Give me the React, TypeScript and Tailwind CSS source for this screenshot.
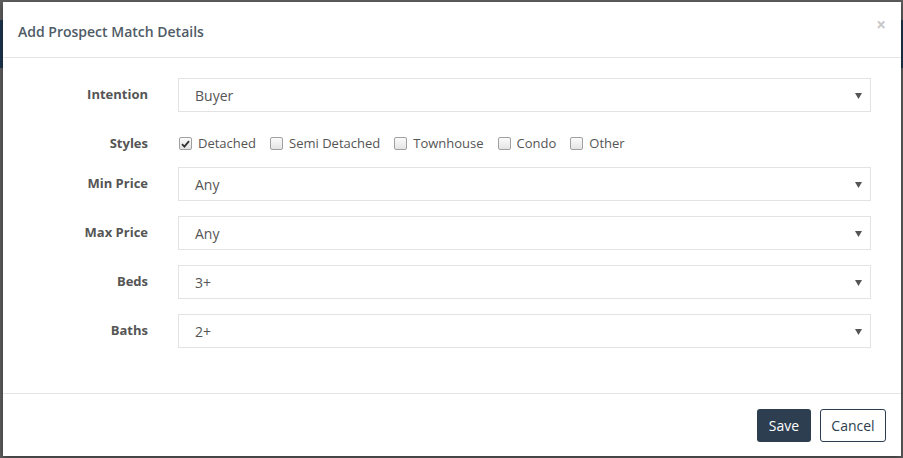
import React from "react";

const font = { fontFamily: '"Open Sans", "Liberation Sans", sans-serif' };

function FakeSelect({ value }: { value: string }) {
    return (
        <div className="flex-1 h-[34px] border border-[#e3e3e3] flex items-center justify-between pl-[16px] pr-[8px] text-[14px] text-[#555]">
            <span>{value}</span>
            <svg width="7" height="6" viewBox="0 0 7 6" className="mt-[1px]">
                <path d="M0 0 H7 L3.5 6 Z" fill="#555" />
            </svg>
        </div>
    );
}

function Check({ checked, label }: { checked?: boolean; label: string }) {
    return (
        <label className="flex items-center gap-[6px] text-[13px] text-[#555]">
            <span className="w-[13px] h-[13px] rounded-[2px] border border-[#a0a0a0] bg-gradient-to-b from-[#fbfbfb] to-[#e4e4e4] flex items-center justify-center">
                {checked && (
                    <svg width="9" height="8" viewBox="0 0 9 8">
                        <path d="M1 4.2 L3.4 6.6 L8 1.2" stroke="#333" strokeWidth="1.8" fill="none" />
                    </svg>
                )}
            </span>
            {label}
        </label>
    );
}

function Row({ label, children }: { label: string; children: React.ReactNode }) {
    return (
        <div className="flex items-center">
            <div className="w-[145px] text-right text-[13px] font-bold text-[#555]">{label}</div>
            <div className="flex-1 flex items-center ml-[30px]">{children}</div>
        </div>
    );
}

export default function App() {
    return (
        <div className="relative w-[903px] h-[458px] bg-[#5e5e5e] overflow-hidden" style={font}>
            {/* page behind the overlay */}
            <div className="absolute left-0 top-[20px] w-full h-[48px] bg-[#1d3550]" />

            {/* Dialog */}
            <div className="absolute left-[3px] top-[2px] w-[898px] h-[454px] bg-white flex flex-col shadow-[0_2px_6px_rgba(0,0,0,0.4)]">
                <div className="h-[56px] border-b border-[#e5e5e5] flex items-center justify-between pl-[15px] pr-[15px]">
                    <h4 className="text-[14px] font-semibold text-[#4f5b66] mt-[4px]">Add Prospect Match Details</h4>
                    <span className="text-[17px] text-[#c8c8c8] font-bold -mt-[10px] leading-none">×</span>
                </div>

                <div className="flex-1 pt-[20px] pr-[30px]">
                    <Row label="Intention">
                        <FakeSelect value="Buyer" />
                    </Row>

                    <div className="mt-[20px] mb-[12px] h-[23px]">
                        <Row label="Styles">
                            <div className="flex items-center gap-[14px] ml-[1px] h-[23px]">
                                <Check checked label="Detached" />
                                <Check label="Semi Detached" />
                                <Check label="Townhouse" />
                                <Check label="Condo" />
                                <Check label="Other" />
                            </div>
                        </Row>
                    </div>

                    <div className="flex flex-col gap-[15px]">
                        <Row label="Min Price">
                            <FakeSelect value="Any" />
                        </Row>
                        <Row label="Max Price">
                            <FakeSelect value="Any" />
                        </Row>
                        <Row label="Beds">
                            <FakeSelect value="3+" />
                        </Row>
                        <Row label="Baths">
                            <FakeSelect value="2+" />
                        </Row>
                    </div>
                </div>

                <div className="border-t border-[#e5e5e5] h-[63px] flex items-center justify-end gap-[9px] pr-[15px] pt-[1px]">
                    <button className="h-[33px] w-[54px] rounded-[3px] bg-[#2c3e50] text-white text-[14px]">Save</button>
                    <button className="h-[33px] w-[66px] rounded-[3px] border border-[#2c3e50] bg-white text-[#2c3e50] text-[14px]">Cancel</button>
                </div>
            </div>
        </div>
    );
}
